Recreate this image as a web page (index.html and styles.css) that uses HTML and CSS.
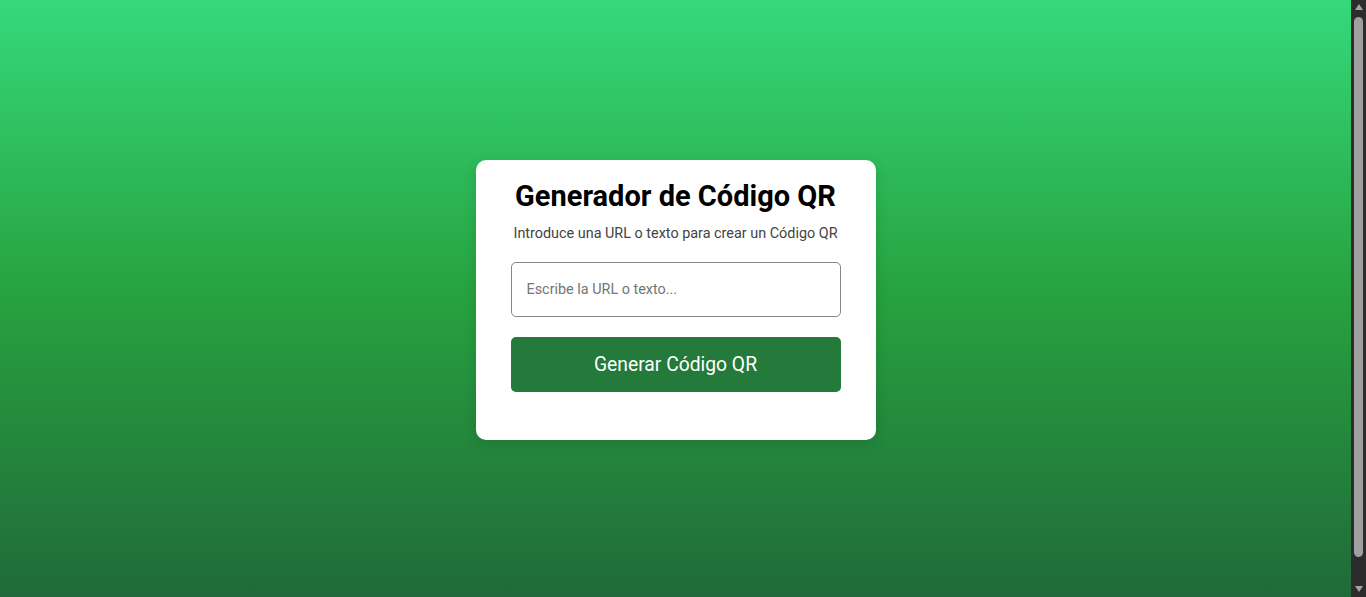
FILE: index.html
```html
<!DOCTYPE html>
<html lang="es">
<head>
<meta charset="utf-8">
<title>Generador de Código QR</title>
<link rel="stylesheet" href="styles.css">
</head>
<body>
<main class="page">
  <section class="card">
    <h1 class="title">Generador de Código QR</h1>
    <p class="subtitle">Introduce una URL o texto para crear un Código QR</p>
    <input class="text-input" type="text" placeholder="Escribe la URL o texto...">
    <button class="generate-btn" type="button">Generar Código QR</button>
  </section>
</main>
<div class="scrollbar" aria-hidden="true">
  <span class="arrow arrow-up"></span>
  <span class="thumb"></span>
  <span class="arrow arrow-down"></span>
</div>
</body>
</html>
```

FILE: styles.css
```css
* {
  box-sizing: border-box;
}

html,
body {
  height: 100%;
  overflow: hidden;
}

body {
  margin: 0;
  display: flex;
  font-family: Roboto, "Liberation Sans", Arial, sans-serif;
  color: #000;
}

.page {
  flex: 1;
  min-height: 100vh;
  padding-top: 3px;
  display: flex;
  align-items: center;
  justify-content: center;
  background: linear-gradient(180deg, #35d97b 0%, #27a13f 50%, #206a39 100%);
}

/* scrollbar look-alike */
.scrollbar {
  flex: none;
  width: 15px;
  height: 100vh;
  background: #2c2c2c;
  display: flex;
  flex-direction: column;
  align-items: center;
  padding: 4px 0 5px;
}

.arrow {
  width: 0;
  height: 0;
  border-left: 4px solid transparent;
  border-right: 4px solid transparent;
}

.arrow-up {
  border-bottom: 6px solid #a3a3a3;
}

.arrow-down {
  margin-top: auto;
  border-top: 6px solid #a3a3a3;
}

.thumb {
  margin-top: 7px;
  width: 9px;
  height: 540px;
  border-radius: 5px;
  background: #9f9f9f;
}

.card {
  width: 400px;
  background: #fff;
  border-radius: 10px;
  padding: 20px 35px 48px;
  box-shadow: 0 4px 14px rgba(0, 0, 0, 0.12);
  display: flex;
  flex-direction: column;
  align-items: stretch;
  text-align: center;
}

.title {
  margin: 0 0 12px;
  font-size: 29px;
  line-height: 33px;
  font-weight: 700;
  color: #000;
}

.subtitle {
  margin: 0 0 20px;
  font-size: 14.4px;
  line-height: 17px;
  color: #444;
}

.text-input {
  height: 55px;
  width: 100%;
  padding: 0 15px;
  border: 1px solid #888;
  border-radius: 5px;
  background: #fff;
  color: #222;
  font-family: inherit;
  font-size: 14.4px;
  outline: none;
}

.text-input::placeholder {
  color: #757575;
}

.generate-btn {
  margin-top: 20px;
  height: 55px;
  width: 100%;
  border: none;
  border-radius: 5px;
  background: #237a3b;
  color: #fff;
  font-family: inherit;
  font-size: 19.3px;
  font-weight: 400;
  cursor: pointer;
}
```
